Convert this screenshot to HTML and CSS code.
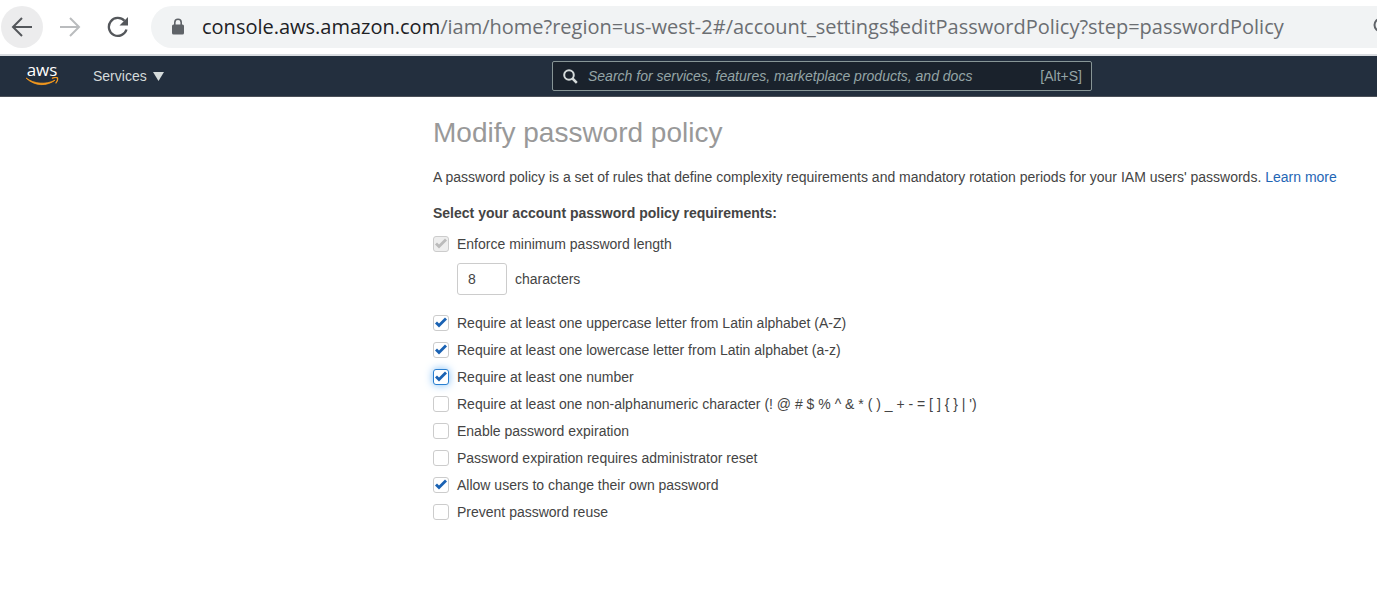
FILE: index.html
```html
<!DOCTYPE html>
<html lang="en">
<head>
<meta charset="utf-8">
<title>Modify password policy</title>
<link rel="stylesheet" href="styles.css">
</head>
<body>
<div class="toolbar">
  <button class="tool tool-active" type="button" aria-label="Back">
    <svg width="22" height="22" viewBox="0 0 22 22" fill="none" stroke="#54575b" stroke-width="2"><path d="M21 11H2.500M11 2L2 11l9 9"/></svg>
  </button>
  <button class="tool" type="button" aria-label="Forward" disabled>
    <svg width="22" height="22" viewBox="0 0 22 22" fill="none" stroke="#babcbe" stroke-width="2"><path d="M1 11h18.500M11 2l9 9-9 9"/></svg>
  </button>
  <button class="tool" type="button" aria-label="Reload">
    <svg width="22" height="22" viewBox="0 0 22 22"><path d="M19.500 13.500A9 9 0 1 1 17.500 4.800" fill="none" stroke="#54575b" stroke-width="2.300"/><path d="M21 1v8.500h-8.500z" fill="#54575b"/></svg>
  </button>
  <div class="address">
    <svg class="lock" width="14" height="18" viewBox="0 0 14 18"><rect x="1" y="6.500" width="12" height="10" rx="1.500" fill="#5f6368"/><path d="M3.800 8V4.500a3.200 3.200 0 0 1 6.400 0V8" fill="none" stroke="#5f6368" stroke-width="1.600"/></svg>
    <span class="url"><span class="host">console.aws.amazon.com</span>/iam/home?region=us-west-2#/account_settings$editPasswordPolicy?step=passwordPolicy</span>
    <svg class="lens-edge" width="4" height="20" viewBox="0 0 4 20"><circle cx="8" cy="8" r="6.500" fill="none" stroke="#5f6368" stroke-width="2"/></svg>
  </div>
</div>
<header class="nav">
  <a class="logo" href="#" aria-label="aws">
    <span class="logo-text">aws</span>
    <svg class="smile" width="34" height="9" viewBox="0 0 34 9"><path d="M1 1C9 7 21 8 30 3.200c-8 6-20 6.500-29-2.200z" fill="#f79a1d" stroke="#f79a1d" stroke-width=".8" stroke-linejoin="round"/><path d="M27.500 1.200c2-.9 4.200-.8 5-.3.400 1.500-.2 3.500-1.500 5" fill="none" stroke="#f79a1d" stroke-width="1.300" stroke-linecap="round"/></svg>
  </a>
  <button class="services" type="button">Services
    <svg width="11" height="9" viewBox="0 0 11 9"><path d="M0 0h11L5.500 9z" fill="#d5dbdb"/></svg>
  </button>
  <label class="search">
    <svg width="15" height="15" viewBox="0 0 15 15" fill="none" stroke="#d5dbdb"><circle cx="6" cy="6" r="4.800" stroke-width="2"/><path d="M9.500 9.500l4.300 4.300" stroke-width="2.500"/></svg>
    <input class="search-input" type="text" aria-label="Search" placeholder="Search for services, features, marketplace products, and docs">
    <span class="shortcut">[Alt+S]</span>
  </label>
</header>
<main class="content">
  <h1 class="title">Modify password policy</h1>
  <p class="intro">A password policy is a set of rules that define complexity requirements and mandatory rotation periods for your IAM users' passwords. <a class="link" href="#">Learn more</a></p>
  <form>
    <h2 class="subtitle">Select your account password policy requirements:</h2>
    <label class="option"><input class="check" type="checkbox" checked disabled>Enforce minimum password length</label>
    <label class="length"><input class="length-input" type="text" value="8">characters</label>
    <label class="option"><input class="check" type="checkbox" checked>Require at least one uppercase letter from Latin alphabet (A-Z)</label>
    <label class="option"><input class="check" type="checkbox" checked>Require at least one lowercase letter from Latin alphabet (a-z)</label>
    <label class="option"><input class="check check-focus" type="checkbox" checked>Require at least one number</label>
    <label class="option"><input class="check" type="checkbox">Require at least one non-alphanumeric character (! @ # $ % ^ &amp; * ( ) _ + - = [ ] { } | ')</label>
    <label class="option"><input class="check" type="checkbox">Enable password expiration</label>
    <label class="option"><input class="check" type="checkbox">Password expiration requires administrator reset</label>
    <label class="option"><input class="check" type="checkbox" checked>Allow users to change their own password</label>
    <label class="option"><input class="check" type="checkbox">Prevent password reuse</label>
  </form>
</main>
</body>
</html>
```
FILE: styles.css
```css
* { box-sizing: border-box; }
body {
  margin: 0;
  background: #fff;
  color: #444;
  font: 14px/20px "Liberation Sans", Arial, sans-serif;
}
button, input { font: inherit; }
.toolbar {
  display: flex;
  align-items: center;
  gap: 6px;
  height: 56px;
  padding-left: 1px;
  border-bottom: 2px solid #d9dce0;
}
.tool {
  display: flex;
  align-items: center;
  justify-content: center;
  flex: none;
  width: 42px;
  height: 42px;
  padding: 0;
  border: 0;
  border-radius: 50%;
  background: none;
}
.tool-active { background: #ececed; }
.address {
  display: flex;
  align-items: center;
  flex: 1;
  min-width: 0;
  height: 42px;
  margin-left: 6px;
  padding-left: 20px;
  border-radius: 21px 0 0 21px;
  background: #f1f3f4;
}
.lock { flex: none; margin-right: 17px; }
.url {
  flex: 1;
  overflow: hidden;
  color: #6b6e72;
  font: 20px/28px "Open Sans", "Segoe UI", sans-serif;
  white-space: nowrap;
}
.host { color: #202124; }
.lens-edge { flex: none; }
.nav {
  display: flex;
  align-items: center;
  height: 41px;
  padding-left: 25px;
  border-bottom: 1px solid #4b5058;
  background: #232f3e;
}
.logo {
  display: flex;
  flex-direction: column;
  align-items: center;
  width: 34px;
  padding-bottom: 3px;
  color: #fff;
  text-decoration: none;
}
.logo-text { font: 500 17px/14px "Open Sans", sans-serif; }
.services {
  display: flex;
  align-items: center;
  gap: 6px;
  margin-left: 34px;
  padding: 0;
  border: 0;
  background: none;
  color: #d5dbdb;
}
.search {
  display: flex;
  align-items: center;
  width: 540px;
  height: 30px;
  margin: 0 285px 0 auto;
  padding: 0 9px 0 10px;
  border: 1px solid #879596;
  border-radius: 2px;
  background: #1a222c;
}
.search-input {
  flex: 1;
  min-width: 0;
  margin-left: 10px;
  padding: 0;
  border: 0;
  outline: 0;
  background: none;
  color: #fff;
}
.search-input::placeholder { color: #95a5a6; font-style: italic; opacity: 1; }
.shortcut { color: #95a5a6; }
.content { padding: 18px 24px 24px 433px; }
.title {
  margin: 0;
  color: #999;
  font-size: 28px;
  font-weight: 400;
  line-height: 36px;
}
.intro { margin: 16px 0; }
.link { color: #1f66b5; text-decoration: none; }
.subtitle { margin: 0 0 7px; font-size: 14px; line-height: 20px; }
.option {
  display: flex;
  align-items: center;
  gap: 8px;
  height: 27px;
}
.check {
  appearance: none;
  flex: none;
  width: 16px;
  height: 16px;
  margin: 0;
  border: 1px solid #ccc;
  border-radius: 3px;
  background: #fff;
  color: #1a62b3;
}
.check:checked::before {
  content: "";
  display: block;
  width: 14px;
  height: 14px;
  background: currentColor;
  clip-path: polygon(1px 8px, 3px 6px, 5px 8px, 11px 2px, 13px 4px, 5px 12px);
}
.check:disabled { background: #eee; color: #bbb; }
.check-focus { border-color: #2a7fd0; box-shadow: 0 0 8px #7dbcf5; }
.length {
  display: flex;
  align-items: center;
  gap: 8px;
  margin: 6px 0 14px 24px;
}
.length-input {
  width: 50px;
  height: 32px;
  padding: 0 10px;
  border: 1px solid #ccc;
  border-radius: 3px;
  background: #fff;
  color: #444;
}
```
